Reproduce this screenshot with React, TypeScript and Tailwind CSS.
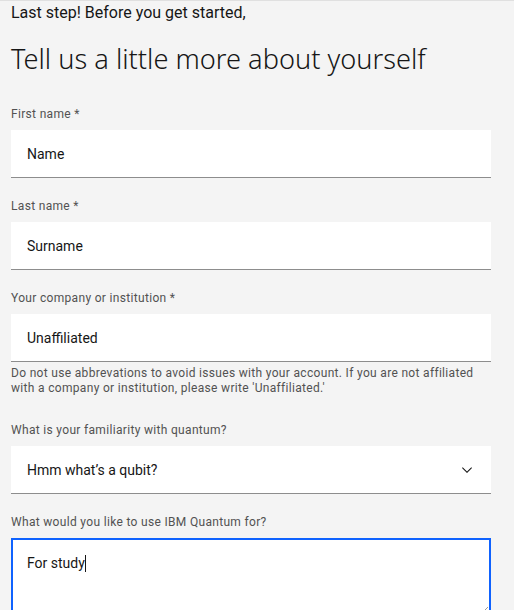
export default function App() {
  const label = "block text-xs leading-4 tracking-[0.32px] text-[#525252] mb-2";
  const field = "w-full h-12 bg-white border-0 border-b border-[#8d8d8d] px-4 text-sm text-[#161616] outline-none font-['Roboto',sans-serif]";

  return (
    <div className="min-h-[610px] bg-[#f4f4f4] border-t border-[#e0e0e0] font-['Roboto',sans-serif] overflow-hidden">
      <div className="w-[480px] ml-[11px]">
        <p className="text-base leading-6 text-[#161616]">Last step! Before you get started,</p>
        <h1 className="mt-4 text-[27.2px] leading-9 font-light text-[#161616] font-['Noto_Sans',sans-serif]">Tell us a little more about yourself</h1>

        <div className="mt-[29px]">
          <label className={label}>First name *</label>
          <input className={field} defaultValue="Name" />
        </div>

        <div className="mt-5">
          <label className={label}>Last name *</label>
          <input className={field} defaultValue="Surname" />
        </div>

        <div className="mt-5">
          <label className={label}>Your company or institution *</label>
          <input className={field} defaultValue="Unaffiliated" />
          <p className="mt-1 text-xs leading-[15px] tracking-[0.32px] text-[#525252]">
            Do not use abbrevations to avoid issues with your account. If you are not affiliated with a company or institution, please write 'Unaffiliated.'
          </p>
        </div>

        <div className="mt-[26px]">
          <label className={label}>What is your familiarity with quantum?</label>
          <div className="h-12 bg-white border-b border-[#8d8d8d] flex items-center justify-between px-4">
            <span className="text-sm text-[#161616]">Hmm what’s a qubit?</span>
            <svg width="16" height="16" viewBox="0 0 16 16" fill="#161616">
              <path d="M8 11L3 6l.7-.7L8 9.6l4.3-4.3.7.7z" />
            </svg>
          </div>
        </div>

        <div className="mt-5">
          <label className={label}>What would you like to use IBM Quantum for?</label>
          <div className="relative h-[80px] bg-white border-2 border-[#0f62fe] px-[14px] pt-[11px]">
            <span className="text-sm leading-5 text-[#161616]">For study</span>
            <span className="inline-block w-px h-[17px] bg-[#161616] align-middle" />
            <svg className="absolute right-0 bottom-0" width="10" height="10" viewBox="0 0 10 10" stroke="#9a9a9a" strokeWidth="1">
              <path d="M9 1L1 9M9 4L4 9M9 7L7 9" />
            </svg>
          </div>
        </div>
      </div>
    </div>
  );
}
